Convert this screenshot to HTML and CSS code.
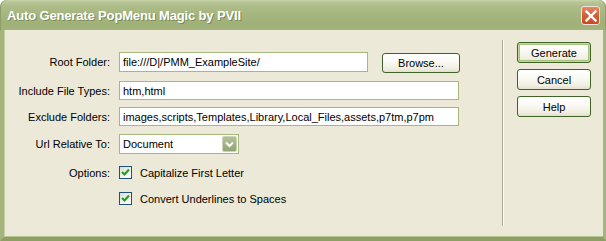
FILE: index.html
```html
<!DOCTYPE html>
<html>
<head>
<meta charset="utf-8">
<link rel="stylesheet" href="styles.css">
</head>
<body>
<div class="window">
  <div class="titlebar">
    <span class="title">Auto Generate PopMenu Magic by PVII</span>
    <span class="close">
      <svg width="12" height="12" viewBox="0 0 12 12"><path d="M1.5 1.5 L10.5 10.5 M10.5 1.5 L1.5 10.5" stroke="#fff" stroke-width="2.4" stroke-linecap="square"/></svg>
    </span>
  </div>
  <div class="client">
    <div class="form">
      <div class="row r1">
        <span class="lbl">Root Folder:</span>
        <div class="field root">file:///D|/PMM_ExampleSite/</div>
        <div class="btn browse">Browse...</div>
      </div>
      <div class="row r2">
        <span class="lbl">Include File Types:</span>
        <div class="field wide">htm,html</div>
      </div>
      <div class="row r3">
        <span class="lbl">Exclude Folders:</span>
        <div class="field wide">images,scripts,Templates,Library,Local_Files,assets,p7tm,p7pm</div>
      </div>
      <div class="row r4">
        <span class="lbl">Url Relative To:</span>
        <div class="select">
          <span class="sel-text">Document</span>
          <span class="sel-btn">
            <svg width="9" height="7" viewBox="0 0 9 7"><path d="M1 1.5 L4.5 5 L8 1.5" fill="none" stroke="#fff" stroke-width="2"/></svg>
          </span>
        </div>
      </div>
      <div class="row r5">
        <span class="lbl">Options:</span>
        <span class="check"><svg width="9" height="9" viewBox="0 0 9 9"><path d="M1 4 L3.5 6.5 L8 1.5" fill="none" stroke="#21a121" stroke-width="2.2"/></svg></span>
        <span class="cb-text">Capitalize First Letter</span>
      </div>
      <div class="row r6">
        <span class="lbl"></span>
        <span class="check"><svg width="9" height="9" viewBox="0 0 9 9"><path d="M1 4 L3.5 6.5 L8 1.5" fill="none" stroke="#21a121" stroke-width="2.2"/></svg></span>
        <span class="cb-text">Convert Underlines to Spaces</span>
      </div>
    </div>
    <div class="sep"></div>
    <div class="actions">
      <div class="btn act default">Generate</div>
      <div class="btn act">Cancel</div>
      <div class="btn act">Help</div>
    </div>
  </div>
</div>
</body>
</html>
```

FILE: styles.css
```css
html, body {
  margin: 0;
  padding: 0;
  background: #ffffff;
}
body {
  font-family: "Liberation Sans", Arial, sans-serif;
  font-size: 11px;
  color: #000;
}
.window {
  width: 606px;
  height: 241px;
  display: flex;
  flex-direction: column;
  box-sizing: border-box;
}
.titlebar {
  height: 30px;
  flex: none;
  display: flex;
  align-items: flex-start;
  justify-content: space-between;
  border-radius: 7px 7px 0 0;
  background: linear-gradient(to bottom, #c9d5aa 0px, #b8c697 2px, #aebd89 6px, #a6b67f 14px, #9fb078 24px, #a4b47d 30px);
  box-shadow: inset 1px 0 0 #8f9f68, inset -1px 0 0 #8f9f68;
  box-sizing: border-box;
  padding: 0 6px 0 7px;
}
.title {
  font-family: "Liberation Sans", Arial, sans-serif;
  font-weight: bold;
  font-size: 13px;
  color: #ffffff;
  text-shadow: 1px 1px 0 #7a8a58;
  margin-top: 8px;
  line-height: 15px;
  letter-spacing: -0.15px;
}
.close {
  margin-top: 6px;
  width: 19px;
  height: 19px;
  box-sizing: border-box;
  border: 1px solid #f4e2d8;
  border-radius: 3px;
  background: linear-gradient(to bottom, #e48a68 0%, #d5603a 45%, #c74a22 100%);
  display: flex;
  align-items: center;
  justify-content: center;
}
.client {
  flex: 1;
  display: flex;
  background: #ece9d8;
  border-left: 4px solid #a5b47d;
  border-right: 3px solid #a5b47d;
  border-bottom: 4px solid #8e9f66;
  box-shadow: inset 1px 0 0 #c2cea4, inset 0 -1px 0 #b7c68f;
}
.form {
  width: 498px;
  flex: none;
  padding-top: 22px;
  display: flex;
  flex-direction: column;
}
.row {
  display: flex;
  align-items: center;
}
.r1 { height: 20px; }
.r2 { height: 19px; margin-top: 9px; }
.r3 { height: 19px; margin-top: 7px; }
.r4 { height: 20px; margin-top: 8px; }
.r5 { height: 13px; margin-top: 12px; }
.r6 { height: 13px; margin-top: 13px; }
.lbl {
  width: 106px;
  margin-right: 9px;
  text-align: right;
  flex: none;
}
.field {
  height: 100%;
  box-sizing: border-box;
  border: 1px solid #a5b97f;
  background: #fff;
  padding-left: 3px;
  display: flex;
  align-items: center;
  white-space: nowrap;
  overflow: hidden;
}
.root { width: 249px; }
.wide { width: 340px; }
.btn {
  box-sizing: border-box;
  border: 1px solid #40632a;
  border-radius: 3px;
  background: linear-gradient(to bottom, #ffffff 0%, #fbfaf4 40%, #f1efe3 80%, #e2dfcb 100%);
  display: flex;
  align-items: center;
  justify-content: center;
}
.browse {
  width: 78px;
  height: 20px;
  margin-left: 14px;
  align-self: flex-start;
  margin-top: 1px;
}
.select {
  width: 120px;
  height: 20px;
  box-sizing: border-box;
  border: 1px solid #a5b97f;
  background: #fff;
  display: flex;
  align-items: center;
}
.sel-text {
  flex: 1;
  padding-left: 3px;
}
.sel-btn {
  width: 15px;
  height: 16px;
  margin-right: 1px;
  box-sizing: border-box;
  border: 1px solid #c9d3b5;
  border-radius: 2px;
  background: linear-gradient(to bottom, #b3c197 0%, #a0b083 60%, #93a474 100%);
  display: flex;
  align-items: center;
  justify-content: center;
}
.check {
  width: 13px;
  height: 13px;
  box-sizing: border-box;
  border: 1px solid #1c5180;
  background: linear-gradient(135deg, #dcdcd5 0%, #f2f2ee 50%, #ffffff 100%);
  display: flex;
  align-items: center;
  justify-content: center;
  flex: none;
}
.cb-text {
  margin-left: 8px;
}
.sep {
  width: 1px;
  height: 186px;
  margin-top: 10px;
  background: #aca899;
  border-right: 1px solid #ffffff;
  flex: none;
}
.actions {
  margin-left: 13px;
  padding-top: 12px;
  display: flex;
  flex-direction: column;
  gap: 6px;
}
.act {
  width: 74px;
  height: 21px;
}
.default {
  box-shadow: inset 0 0 0 1px #c3d7a0, inset 0 0 0 2px #a7c27a;
}
```
